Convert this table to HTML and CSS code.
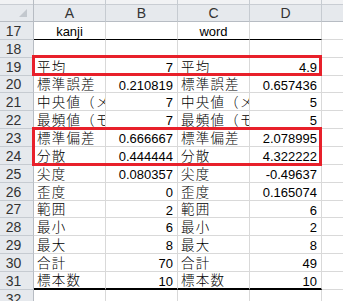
FILE: index.html
```html
<!DOCTYPE html>
<html lang="ja">
<head>
<meta charset="utf-8">
<link rel="stylesheet" href="styles.css">
</head>
<body>
<div class="sheet">
  <div class="corner"><span class="tri"></span></div>
  <div class="colhead">A</div>
  <div class="colhead">B</div>
  <div class="colhead">C</div>
  <div class="colhead">D</div>
  <div class="colhead last"></div>

  <div class="rowhead">17</div>
  <div class="cell c top-line">kanji</div>
  <div class="cell top-line"></div>
  <div class="cell c top-line">word</div>
  <div class="cell top-line"></div>
  <div class="cell e"></div>

  <div class="rowhead">18</div>
  <div class="cell"></div><div class="cell"></div><div class="cell"></div><div class="cell"></div><div class="cell e"></div>

  <div class="rowhead">19</div>
  <div class="cell l">平均</div><div class="cell n">7</div><div class="cell l">平均</div><div class="cell n">4.9</div><div class="cell e"></div>

  <div class="rowhead">20</div>
  <div class="cell l">標準誤差</div><div class="cell n">0.210819</div><div class="cell l">標準誤差</div><div class="cell n">0.657436</div><div class="cell e"></div>

  <div class="rowhead">21</div>
  <div class="cell l">中央値（メジアン）</div><div class="cell n">7</div><div class="cell l">中央値（メジアン）</div><div class="cell n">5</div><div class="cell e"></div>

  <div class="rowhead">22</div>
  <div class="cell l">最頻値（モード）</div><div class="cell n">7</div><div class="cell l">最頻値（モード）</div><div class="cell n">5</div><div class="cell e"></div>

  <div class="rowhead">23</div>
  <div class="cell l">標準偏差</div><div class="cell n">0.666667</div><div class="cell l">標準偏差</div><div class="cell n">2.078995</div><div class="cell e"></div>

  <div class="rowhead">24</div>
  <div class="cell l">分散</div><div class="cell n">0.444444</div><div class="cell l">分散</div><div class="cell n">4.322222</div><div class="cell e"></div>

  <div class="rowhead">25</div>
  <div class="cell l">尖度</div><div class="cell n">0.080357</div><div class="cell l">尖度</div><div class="cell n">-0.49637</div><div class="cell e"></div>

  <div class="rowhead">26</div>
  <div class="cell l">歪度</div><div class="cell n">0</div><div class="cell l">歪度</div><div class="cell n">0.165074</div><div class="cell e"></div>

  <div class="rowhead">27</div>
  <div class="cell l">範囲</div><div class="cell n">2</div><div class="cell l">範囲</div><div class="cell n">6</div><div class="cell e"></div>

  <div class="rowhead">28</div>
  <div class="cell l">最小</div><div class="cell n">6</div><div class="cell l">最小</div><div class="cell n">2</div><div class="cell e"></div>

  <div class="rowhead">29</div>
  <div class="cell l">最大</div><div class="cell n">8</div><div class="cell l">最大</div><div class="cell n">8</div><div class="cell e"></div>

  <div class="rowhead">30</div>
  <div class="cell l">合計</div><div class="cell n">70</div><div class="cell l">合計</div><div class="cell n">49</div><div class="cell e"></div>

  <div class="rowhead">31</div>
  <div class="cell l bottom-line">標本数</div><div class="cell n bottom-line">10</div><div class="cell l bottom-line">標本数</div><div class="cell n bottom-line">10</div><div class="cell e"></div>

  <div class="rowhead">32</div>
  <div class="cell"></div><div class="cell"></div><div class="cell"></div><div class="cell"></div><div class="cell e"></div>

  <div class="box box-mean"></div>
  <div class="box box-sd"></div>
</div>
</body>
</html>
```
FILE: styles.css
```css
html, body {
  margin: 0;
  padding: 0;
  background: #ffffff;
  overflow: hidden;
}

.sheet {
  position: relative;
  width: 343px;
  height: 301px;
  overflow: hidden;
  display: grid;
  grid-template-columns: 34px 72px 72px 72px 72px 1fr;
  grid-template-rows: 22px 18px 18px 18px 17px 18px 18px 18px 18px 18px 18px 17px 18px 18px 18px 18px 18px;
  font-family: "Liberation Sans", "Noto Sans CJK JP", sans-serif;
  font-size: 13px;
  color: #000000;
}

.corner,
.colhead,
.rowhead {
  box-sizing: border-box;
  background: #e6e9ed;
  color: #333333;
}

.corner,
.colhead {
  background: linear-gradient(#f1f2f4 0, #f1f2f4 4px, #c9cdd3 4px, #c9cdd3 5px, #e6e9ed 5px);
}

.corner {
  border-right: 1px solid #b7bcc3;
  border-bottom: 1px solid #b7bcc3;
  display: flex;
  justify-content: flex-end;
  align-items: flex-end;
  padding: 0 6px 4px 0;
}

.tri {
  width: 0;
  height: 0;
  border-left: 8px solid transparent;
  border-bottom: 8px solid #c3c8ce;
}

.colhead {
  border-right: 1px solid #c6cbd1;
  border-bottom: 1px solid #b7bcc3;
  display: flex;
  align-items: center;
  justify-content: center;
  font-size: 14px;
  padding-top: 5px;
}

.colhead.last {
  border-right: none;
}

.rowhead {
  border-right: 1px solid #b7bcc3;
  border-bottom: 1px solid #c6cbd1;
  display: flex;
  align-items: center;
  justify-content: center;
  padding-right: 6px;
  font-size: 14px;
}

.cell {
  box-sizing: border-box;
  border-right: 1px solid #d9d9d9;
  border-bottom: 1px solid #d9d9d9;
  white-space: nowrap;
  overflow: hidden;
  display: flex;
  align-items: center;
  line-height: 1;
  padding-top: 2px;
}

.cell.e {
  border-right: none;
}

.cell.c {
  justify-content: center;
}

.cell.l {
  padding-left: 3px;
  font-size: 13.5px;
  font-weight: 300;
  letter-spacing: 1.2px;
}

.cell.n {
  justify-content: flex-end;
  padding-right: 4px;
}

.cell.top-line {
  border-bottom: 1px solid #000000;
}

.cell.bottom-line {
  border-bottom: 2px solid #000000;
}

.box {
  position: absolute;
  left: 32px;
  width: 290px;
  box-sizing: border-box;
  border: 3px solid #e8202a;
}

.box-mean {
  top: 55px;
  height: 21px;
}

.box-sd {
  top: 127px;
  height: 39px;
}
```
